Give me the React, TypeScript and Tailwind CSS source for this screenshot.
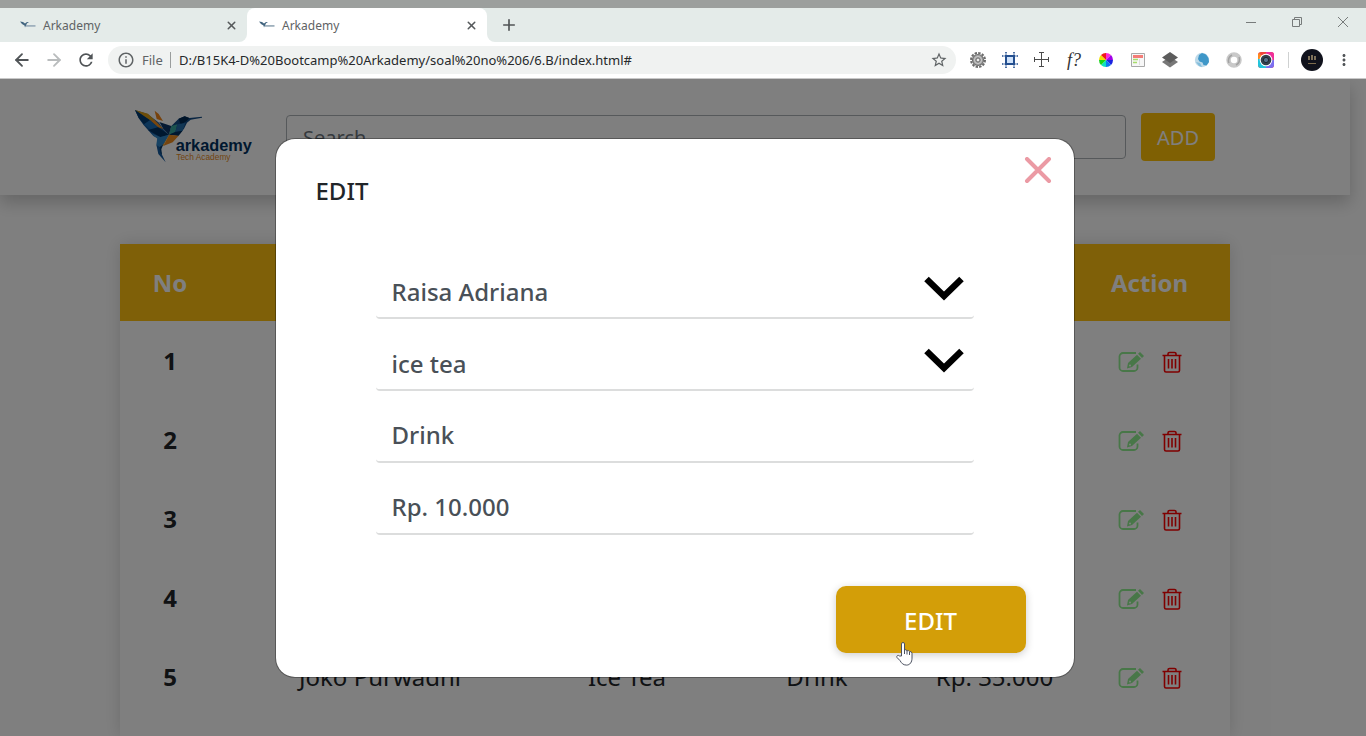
import type { ReactNode } from "react";
import { ArrowLeft, ArrowRight, Plus, X } from "lucide-react";
import { MdRefresh, MdInfoOutline, MdStarBorder, MdMoreVert } from "react-icons/md";

const orders = [
  { no: 1, cashier: "", product: "", category: "", price: "" },
  { no: 2, cashier: "", product: "", category: "", price: "" },
  { no: 3, cashier: "", product: "", category: "", price: "" },
  { no: 4, cashier: "", product: "", category: "", price: "" },
  { no: 5, cashier: "Joko Purwadhi", product: "Ice Tea", category: "Drink", price: "Rp. 35.000" },
];

function Favicon() {
  return (
    <svg width="16" height="16" viewBox="0 0 16 16" aria-hidden="true">
      <path d="M0 4.5 3 5l2 1.5L7 5l2 .3-2 1-1 2.2-1 2L4.5 8.5 2 7z" fill="#41647f" />
      <path d="M6 8h9.500v1.800H6z" fill="#9fb0bd" />
    </svg>
  );
}

function Tab({ active }: { active?: boolean }) {
  return (
    <div className={active ? "flex w-60 items-center rounded-t-lg bg-white pl-3 pr-2" : "flex w-[247px] items-center pl-5 pr-2"}>
      <Favicon />
      <span className="ml-[7px] flex-1 pt-px text-xs text-[#5f6365]">Arkademy</span>
      <button aria-label="Close tab" className="flex size-4 items-center justify-center text-[#55595b]">
        <X size={13} strokeWidth={2.8} />
      </button>
    </div>
  );
}

function Extension({ label, children }: { label: string; children: ReactNode }) {
  return (
    <button aria-label={label} className="flex w-8 items-center justify-center">
      <svg width="16" height="16" viewBox="0 0 16 16">{children}</svg>
    </button>
  );
}

function Extensions() {
  return (
    <div className="flex">
      <Extension label="Settings gear">
        <circle cx="8" cy="8" r="7" fill="none" stroke="#6b6b6b" strokeWidth="2" strokeDasharray="2.400 1.265" />
        <circle cx="8" cy="8" r="5.500" fill="#a4a4a4" stroke="#6e6e6e" strokeWidth="1.200" />
        <circle cx="8" cy="8" r="3.600" fill="none" stroke="#c9c9c9" />
        <circle cx="8" cy="8" r="2" fill="#eee" stroke="#6c6c6c" />
      </Extension>
      <Extension label="Grid">
        <path d="M4 4h8v8H4z" fill="#cfe2fa" />
        <path d="M4 0v4M12 0v4M4 12v4M12 12v4M0 4h4M0 12h4M12 4h4M12 12h4" stroke="#234f8f" strokeWidth="1.600" strokeDasharray="1.500 1" />
        <path d="M4 4h8v8H4z" fill="none" stroke="#234f8f" strokeWidth="2" />
      </Extension>
      <Extension label="Dimensions">
        <path d="M7.500 0v15M0 7.500h15M5 .5h5M5 14.500h5M.5 5v5M14.500 5v5" fill="none" stroke="#4a4a4a" />
      </Extension>
      <button aria-label="Font finder" className="w-8 text-center font-['Liberation_Serif',serif] text-lg leading-5 text-[#333] italic">
        f?
      </button>
      <Extension label="Colour picker">
        <path d="M8 8V1a7 7 0 0 1 5 2z" fill="#ff2ad4" />
        <path d="M8 8l5-5a7 7 0 0 1 2 5z" fill="#a000e8" />
        <path d="M8 8h7a7 7 0 0 1-2 5z" fill="#1c22e0" />
        <path d="M8 8l5 5a7 7 0 0 1-5 2z" fill="#0a78f0" />
        <path d="M8 8v7a7 7 0 0 1-5-2z" fill="#0ce0c0" />
        <path d="M8 8l-5 5a7 7 0 0 1-2-5z" fill="#16d416" />
        <path d="M8 8H1a7 7 0 0 1 2-5z" fill="#f0e000" />
        <path d="M8 8 3 3a7 7 0 0 1 5-2z" fill="#f01818" />
      </Extension>
      <Extension label="Page layout">
        <path d="M1.500 1.500h13v13h-13z" fill="#f7f7f7" stroke="#a8a8a8" />
        <path d="M3 3h10v3H3z" fill="#f47d78" />
        <path d="M3 7.500h5M3 10.500h4" stroke="#a6dc6a" strokeWidth="1.500" />
        <path d="M9.500 7v6" stroke="#ddd" />
      </Extension>
      <Extension label="Layers">
        <path d="M8 4.500 16 10l-8 5.500L0 10z" fill="#777" />
        <path d="M8 0l8 5.500L8 11 0 5.500z" fill="#5c5c5c" />
      </Extension>
      <Extension label="Globe">
        <circle cx="8" cy="8" r="7.200" fill="#bcd9e9" />
        <path d="M5 3 8 1l4 1.500 2.500 3.500.5 4-2.500 3.500-3-.5-1-2.500-3-1L4 7z" fill="#3f97c8" />
        <path d="M2 10l4 1 2 4-3-1z" fill="#82bddb" />
      </Extension>
      <Extension label="Ring">
        <circle cx="8" cy="8" r="5.500" fill="none" stroke="#c9c9c9" strokeWidth="4.500" />
        <path d="M3 11a6 6 0 0 1 3-8M13 5a6 6 0 0 1-3 8" fill="none" stroke="#a2a2a2" strokeWidth="1.500" />
      </Extension>
      <Extension label="Camera">
        <rect width="16" height="16" rx="3" fill="#f0453a" />
        <path d="M8 0h5a3 3 0 0 1 3 3v5H8z" fill="#ef2f9a" />
        <path d="M0 8V3a3 3 0 0 1 1-2l7 7z" fill="#ff8a1e" />
        <path d="M0 7h8v9H3a3 3 0 0 1-3-3z" fill="#22c5dc" />
        <path d="M8 8h8v5a3 3 0 0 1-3 3H8z" fill="#7b6ff0" />
        <circle cx="8" cy="8" r="6.300" fill="#fff" />
        <circle cx="8" cy="8" r="5.300" fill="#33404c" />
        <circle cx="8" cy="8" r="2.600" fill="#56708a" stroke="#1b2630" />
      </Extension>
    </div>
  );
}

function BrowserChrome() {
  return (
    <div className="shrink-0">
      <div className="h-2 bg-[#9c9f9d]" />
      <div className="flex h-[34px] bg-[#e4ebe9]">
        <div className="flex bg-white">
          <div className="flex rounded-br-lg bg-[#e4ebe9]">
            <Tab />
          </div>
        </div>
        <Tab active />
        <div className="flex flex-1 bg-white">
          <div className="flex flex-1 items-center justify-between rounded-bl-lg bg-[#e4ebe9] pl-[13px]">
            <button aria-label="New tab" className="text-[#505456]">
              <Plus size={18} strokeWidth={2.2} />
            </button>
            <div className="flex self-start text-[#777b7b]">
              <button aria-label="Minimize" className="flex h-7 w-[46px] items-center justify-center">
                <svg width="10" height="10" viewBox="0 0 10 10" stroke="currentColor"><path d="M0 5.500h10" /></svg>
              </button>
              <button aria-label="Restore" className="flex h-7 w-[46px] items-center justify-center">
                <svg width="10" height="10" viewBox="0 0 10 10" fill="none" stroke="currentColor"><path d="M.5 2.500h7v7h-7zM2.500 2.500v-2h7v7h-2" /></svg>
              </button>
              <button aria-label="Close window" className="flex h-7 w-[46px] items-center justify-center">
                <svg width="10" height="10" viewBox="0 0 10 10" stroke="currentColor"><path d="M0 0l10 10M10 0 0 10" /></svg>
              </button>
            </div>
          </div>
        </div>
      </div>
      <div className="flex h-[37px] items-center border-b border-[#c8c8c8] bg-white pr-[13px]">
        <div className="flex w-[108px] items-center gap-3 pl-3 text-[#505457]">
          <button aria-label="Back"><ArrowLeft size={20} strokeWidth={2.2} /></button>
          <button aria-label="Forward" className="text-[#b9bcbd]"><ArrowRight size={20} strokeWidth={2.2} /></button>
          <button aria-label="Reload"><MdRefresh size={20} /></button>
        </div>
        <div className="flex h-7 flex-1 items-center rounded-full bg-[#f0f2f1] px-2 text-[13px] text-[#5f6365]">
          <MdInfoOutline size={18} className="mx-px" />
          <span className="ml-1.5 w-7 pt-px">File</span>
          <span className="h-4 w-px bg-[#9a9d9d]" />
          <input aria-label="Address" readOnly value="D:/B15K4-D%20Bootcamp%20Arkademy/soal%20no%206/6.B/index.html#" className="ml-2 flex-1 bg-transparent pt-px text-[#26292b] outline-none" />
          <button aria-label="Bookmark this page"><MdStarBorder size={18} /></button>
        </div>
        <div className="ml-1.5"><Extensions /></div>
        <span className="mx-1.5 h-4 w-px bg-[#cfd1d1]" />
        <button aria-label="Profile" className="ml-1.5">
          <svg width="22" height="22" viewBox="0 0 22 22">
            <circle cx="11" cy="11" r="11" fill="#10121c" />
            <path d="M8 7v4M11 6v5M14 7v4" stroke="#c9b184" strokeWidth="1.200" />
            <path d="M7 14.500h8" stroke="#7d6c4d" />
          </svg>
        </button>
        <button aria-label="Menu" className="ml-3 text-[#505457]"><MdMoreVert size={18} /></button>
      </div>
    </div>
  );
}

function Logo() {
  return (
    <svg width="120" height="56" viewBox="73 57 360 168" role="img" aria-label="Arkademy Tech Academy">
      <path d="M73 60 110 72 145 98 158 118 175 134 150 147 128 138 112 120 98 104 84 84z" fill="#155a9e" />
      <path d="M73 60 112 71 132 90 118 91z" fill="#d99a12" />
      <path d="M73 60 118 91 100 103 84 84z" fill="#003a70" />
      <path d="M118 91 132 90 158 117 142 112z" fill="#ef8b1c" />
      <path d="M100 103 118 91 142 112 122 120z" fill="#1a6cb5" />
      <path d="M112 120 142 112 175 134 150 142z" fill="#003060" />
      <path d="M122 130 150 142 145 149 130 139z" fill="#3587c4" />
      <path d="M132 62 144 72 157 93 138 87z" fill="#ef8418" />
      <path d="M146 96 182 108 175 134 158 117z" fill="#0c3566" />
      <path d="M182 108 204 86 222 79 236 84 274 80 274 83 240 89 229 98 220 116 203 136 175 134z" fill="#124a84" />
      <path d="M204 86 222 79 236 84 228 93 210 104z" fill="#002850" />
      <path d="M182 108 200 103 194 126 175 134z" fill="#36a79d" />
      <path d="M200 103 224 99 216 122 194 126z" fill="#236ca8" />
      <path d="M194 126 216 122 203 138 175 134z" fill="#03305e" />
      <path d="M175 134 204 137 186 157 158 168z" fill="#ed8a1c" />
      <path d="M175 134 168 148 158 168 150 158z" fill="#eba52a" />
      <path d="M175 134 140 143 137 164 146 175 160 160z" fill="#2f86c8" />
      <path d="M146 170 137 164 143 192 165 217 154 194z" fill="#155a9e" />
      <path d="M158 163 146 172 150 190 154 194 152 178z" fill="#003a70" />
      <text x="195" y="183" fontSize="49" fontWeight="700" fill="#00305f" fontFamily="Liberation Sans, sans-serif">arkademy</text>
      <text x="197" y="210" fontSize="25" fill="#e58a26" fontFamily="Liberation Sans, sans-serif">Tech Academy</text>
    </svg>
  );
}

function EditIcon() {
  return (
    <svg width="26" height="22" viewBox="0 0 26 22" aria-hidden="true">
      <path d="M18 2H5a3.500 3.500 0 0 0-3.500 3.500v11A3.500 3.500 0 0 0 5 20h11a3.500 3.500 0 0 0 3.500-3.500V13.500" fill="none" stroke="currentColor" strokeWidth="1.800" />
      <path d="M9 17.500 10 12 19 3.800 23 7.800 14 16z" fill="currentColor" />
      <path d="M20 2.800 22 1 26 5 24 7z" fill="currentColor" />
      <circle cx="12" cy="14.500" r="1" fill="#fff" />
    </svg>
  );
}

function TrashIcon() {
  return (
    <svg width="20" height="22" viewBox="0 0 20 22" fill="none" stroke="currentColor" strokeWidth="1.600" aria-hidden="true">
      <path d="M.5 4.500h19M6 4.500V3a1.500 1.500 0 0 1 1.500-1.500h5A1.500 1.500 0 0 1 14 3v1.500M2.500 4.500V19.500a1.500 1.500 0 0 0 1.500 1.500h12a1.500 1.500 0 0 0 1.500-1.500V4.500M6.500 8v9.500M10 8v9.500M13.500 8v9.500" />
    </svg>
  );
}

function Page() {
  return (
    <div className="flex flex-1 flex-col pr-4 text-[#212529]">
      <header className="flex h-[116px] items-center bg-white shadow-[0_8px_16px_rgba(0,0,0,0.2)]">
        <div className="mx-auto flex w-full max-w-[1110px] items-center px-[15px]">
          <Logo />
          <input aria-label="Search" placeholder="Search..." className="ml-[31px] h-11 flex-1 rounded border border-[#adb2b7] px-4 text-xl placeholder:text-[#6c757d]" />
          <button className="ml-[15px] h-12 rounded bg-[#ffc107] px-4 pt-0.5 text-xl text-white">ADD</button>
        </div>
      </header>
      <main className="mx-auto mt-[49px] w-full max-w-[1110px] flex-1 bg-white shadow-[0_0_16px_rgba(0,0,0,0.15)]">
        <table className="w-full table-fixed text-center text-2xl">
          <colgroup>
            <col className="w-[100px]" />
            <col className="w-[320px]" />
            <col className="w-[174px]" />
            <col className="w-[206px]" />
            <col className="w-[149px]" />
            <col className="w-[161px]" />
          </colgroup>
          <thead>
            <tr className="h-[77px] bg-[#fec010] text-white">
              <th>No</th>
              <th />
              <th />
              <th />
              <th />
              <th>Action</th>
            </tr>
          </thead>
          <tbody>
            {orders.map((order) => (
              <tr key={order.no} className="h-[79px]">
                <th scope="row">{order.no}</th>
                <td>{order.cashier}</td>
                <td>{order.product}</td>
                <td>{order.category}</td>
                <td>{order.price}</td>
                <td>
                  <div className="flex items-center justify-center gap-[18px] pt-0.5">
                    <button aria-label="Edit order" className="text-[#90ee90]"><EditIcon /></button>
                    <button aria-label="Delete order" className="text-[#ff0000]"><TrashIcon /></button>
                  </div>
                </td>
              </tr>
            ))}
          </tbody>
        </table>
      </main>
    </div>
  );
}

const field = "h-14 w-full appearance-none rounded border-b-2 border-[#dcdddd] bg-white px-4 text-2xl font-medium text-[#495057] outline-none";

function SelectField({ label, value }: { label: string; value: string }) {
  return (
    <div className="relative">
      <select aria-label={label} className={`${field} pt-1`} defaultValue={value}>
        <option>{value}</option>
      </select>
      <svg className="pointer-events-none absolute top-[13px] right-2.5" width="40" height="26" viewBox="0 0 40 26" aria-hidden="true">
        <path d="M2.500 3 20 20 37.500 3" fill="none" stroke="#000" strokeWidth="6.500" />
      </svg>
    </div>
  );
}

function EditDialog() {
  return (
    <div className="absolute inset-0 bg-black/50 pr-[17px]">
      <div role="dialog" aria-modal="true" aria-labelledby="dialog-title" className="relative mx-auto mt-[59px] flex w-full max-w-[800px] flex-col rounded-[20px] border border-black/30 bg-white bg-clip-padding">
        <div className="flex items-start justify-between pt-4 pr-5 pl-10">
          <h2 id="dialog-title" className="mt-5 text-2xl font-medium text-[#212529]">EDIT</h2>
          <button aria-label="Close" className="p-0.5">
            <svg width="28" height="28" viewBox="0 0 28 28"><path d="M3 2l22 22M25 2 3 24" stroke="#eb9aa4" strokeWidth="4" strokeLinecap="round" /></svg>
          </button>
        </div>
        <form className="pb-6">
          <div className="mt-14 flex flex-col gap-4 px-[100px]">
            <SelectField label="Cashier" value="Raisa Adriana" />
            <SelectField label="Product" value="ice tea" />
            <input aria-label="Category" className={field} defaultValue="Drink" />
            <input aria-label="Price" className={field} defaultValue="Rp. 10.000" />
          </div>
          <div className="mt-[51px] flex justify-end pr-12">
            <button type="button" className="relative h-[67px] w-[190px] rounded-[10px] bg-[#d39e08] pt-0.5 text-2xl font-medium text-white shadow-[0_2px_8px_rgba(0,0,0,0.2)]">
              EDIT
              <svg className="absolute top-14 left-[60px]" width="18" height="24" viewBox="0 0 18 24" aria-hidden="true">
                <path d="M5.500 14V2a1.500 1.500 0 0 1 3 0v6q1.500-1 2.500.8 1.500-.8 2.500.8 2-.5 2.500 1.500v5c0 4-2 7-5.500 7-3.500 0-5-2-6.500-4.500L1 15.500c-.8-1.500.8-3 2.500-1.500z" fill="#fff" stroke="#4b5160" strokeWidth="1" />
                <path d="M8.500 8v4M11 9v3.500M13.500 10v3" stroke="#4b5160" strokeWidth="1" />
              </svg>
            </button>
          </div>
        </form>
      </div>
    </div>
  );
}

export default function App() {
  return (
    <div className="flex min-h-screen flex-col bg-white font-['Noto_Sans',sans-serif]">
      <BrowserChrome />
      <div className="relative flex flex-1 flex-col overflow-hidden">
        <Page />
        <EditDialog />
      </div>
    </div>
  );
}
